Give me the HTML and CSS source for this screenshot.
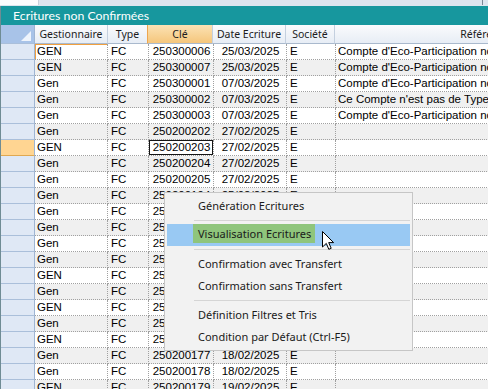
FILE: index.html
```html
<!DOCTYPE html>
<html lang="fr">
<head>
  <meta charset="UTF-8" />
  <title>Ecritures non Confirmées</title>
  <link rel="stylesheet" href="styles.css">
</head>
<body>
  <div class="strip"><div class="tab"></div><div class="tick"></div></div>
  <div class="panel">
    <div class="caption">Ecritures non Confirmées</div>
    <div class="grid">
      <div class="row head">
        <div class="sel corner"><span class="tri"></span></div>
        <div class="c gest">Gestionnaire</div>
        <div class="c type">Type</div>
        <div class="c cle sorted">Clé</div>
        <div class="c date">Date Ecriture</div>
        <div class="c soc">Société</div>
        <div class="c ref">Référence</div>
      </div>
      <div class="row first"><div class="sel"></div><div class="c gest">GEN</div><div class="c type">FC</div><div class="c cle">250300006</div><div class="c date">25/03/2025</div><div class="c soc">E</div><div class="c ref">Compte d'Eco-Participation non renseigné</div></div>
      <div class="row"><div class="sel"></div><div class="c gest">GEN</div><div class="c type">FC</div><div class="c cle">250300007</div><div class="c date">25/03/2025</div><div class="c soc">E</div><div class="c ref">Compte d'Eco-Participation non renseigné</div></div>
      <div class="row"><div class="sel"></div><div class="c gest">Gen</div><div class="c type">FC</div><div class="c cle">250300001</div><div class="c date">07/03/2025</div><div class="c soc">E</div><div class="c ref">Compte d'Eco-Participation non renseigné</div></div>
      <div class="row"><div class="sel"></div><div class="c gest">Gen</div><div class="c type">FC</div><div class="c cle">250300002</div><div class="c date">07/03/2025</div><div class="c soc">E</div><div class="c ref">Ce Compte n'est pas de Type Produit</div></div>
      <div class="row"><div class="sel"></div><div class="c gest">Gen</div><div class="c type">FC</div><div class="c cle">250300003</div><div class="c date">07/03/2025</div><div class="c soc">E</div><div class="c ref">Compte d'Eco-Participation non renseigné</div></div>
      <div class="row"><div class="sel"></div><div class="c gest">Gen</div><div class="c type">FC</div><div class="c cle">250200202</div><div class="c date">27/02/2025</div><div class="c soc">E</div><div class="c ref"></div></div>
      <div class="row current"><div class="sel"></div><div class="c gest">GEN</div><div class="c type">FC</div><div class="c cle focus">250200203</div><div class="c date">27/02/2025</div><div class="c soc">E</div><div class="c ref"></div></div>
      <div class="row"><div class="sel"></div><div class="c gest">Gen</div><div class="c type">FC</div><div class="c cle">250200204</div><div class="c date">27/02/2025</div><div class="c soc">E</div><div class="c ref"></div></div>
      <div class="row"><div class="sel"></div><div class="c gest">Gen</div><div class="c type">FC</div><div class="c cle">250200205</div><div class="c date">27/02/2025</div><div class="c soc">E</div><div class="c ref"></div></div>
      <div class="row"><div class="sel"></div><div class="c gest">Gen</div><div class="c type">FC</div><div class="c cle">250200194</div><div class="c date">25/02/2025</div><div class="c soc">E</div><div class="c ref"></div></div>
      <div class="row"><div class="sel"></div><div class="c gest">Gen</div><div class="c type">FC</div><div class="c cle">250200195</div><div class="c date">25/02/2025</div><div class="c soc">E</div><div class="c ref"></div></div>
      <div class="row"><div class="sel"></div><div class="c gest">Gen</div><div class="c type">FC</div><div class="c cle">250200196</div><div class="c date">25/02/2025</div><div class="c soc">E</div><div class="c ref"></div></div>
      <div class="row"><div class="sel"></div><div class="c gest">Gen</div><div class="c type">FC</div><div class="c cle">250200197</div><div class="c date">25/02/2025</div><div class="c soc">E</div><div class="c ref"></div></div>
      <div class="row"><div class="sel"></div><div class="c gest">Gen</div><div class="c type">FC</div><div class="c cle">250200188</div><div class="c date">21/02/2025</div><div class="c soc">E</div><div class="c ref"></div></div>
      <div class="row"><div class="sel"></div><div class="c gest">GEN</div><div class="c type">FC</div><div class="c cle">250200189</div><div class="c date">21/02/2025</div><div class="c soc">E</div><div class="c ref"></div></div>
      <div class="row"><div class="sel"></div><div class="c gest">Gen</div><div class="c type">FC</div><div class="c cle">250200182</div><div class="c date">20/02/2025</div><div class="c soc">E</div><div class="c ref"></div></div>
      <div class="row"><div class="sel"></div><div class="c gest">GEN</div><div class="c type">FC</div><div class="c cle">250200183</div><div class="c date">20/02/2025</div><div class="c soc">E</div><div class="c ref"></div></div>
      <div class="row"><div class="sel"></div><div class="c gest">Gen</div><div class="c type">FC</div><div class="c cle">250200180</div><div class="c date">19/02/2025</div><div class="c soc">E</div><div class="c ref"></div></div>
      <div class="row"><div class="sel"></div><div class="c gest">GEN</div><div class="c type">FC</div><div class="c cle">250200181</div><div class="c date">19/02/2025</div><div class="c soc">E</div><div class="c ref"></div></div>
      <div class="row"><div class="sel"></div><div class="c gest">Gen</div><div class="c type">FC</div><div class="c cle">250200177</div><div class="c date">18/02/2025</div><div class="c soc">E</div><div class="c ref"></div></div>
      <div class="row"><div class="sel"></div><div class="c gest">Gen</div><div class="c type">FC</div><div class="c cle">250200178</div><div class="c date">18/02/2025</div><div class="c soc">E</div><div class="c ref"></div></div>
      <div class="row"><div class="sel"></div><div class="c gest">GEN</div><div class="c type">FC</div><div class="c cle">250200179</div><div class="c date">19/02/2025</div><div class="c soc">E</div><div class="c ref"></div></div>
    </div>
  </div>

  <div class="menu">
    <div class="item">Génération Ecritures</div>
    <div class="sep"></div>
    <div class="item hover"><span class="label">Visualisation Ecritures</span></div>
    <div class="sep"></div>
    <div class="item">Confirmation avec Transfert</div>
    <div class="item">Confirmation sans Transfert</div>
    <div class="sep"></div>
    <div class="item">Définition Filtres et Tris</div>
    <div class="item">Condition par Défaut (Ctrl-F5)</div>
  </div>

  <svg class="pointer" width="14" height="20" viewBox="0 0 14 20">
    <path d="M0.5 0.5 L0.5 16 L4.3 12.4 L6.8 18.3 L9.2 17.3 L6.7 11.6 L11.6 11.6 Z" fill="#fff" stroke="#000" stroke-width="1" stroke-linejoin="round"/>
  </svg>
</body>
</html>
```

FILE: styles.css
```css
body {
  margin: 0;
  width: 488px;
  height: 389px;
  overflow: hidden;
  background-color: #ffffff;
  font-family: 'Liberation Sans', Arial, sans-serif;
  position: relative;
}
.strip {
  height: 6px;
  background-color: #dde5ee;
  display: flex;
  justify-content: space-between;
}
.tab {
  width: 38px;
  height: 5px;
  background-color: #fbfcfd;
  border-right: 1px solid #c8d0da;
}
.tick {
  width: 1px;
  height: 5px;
  margin-right: 5px;
  background-color: #7a8896;
}
.panel {
  border-left: 1px solid #6f8c94;
  overflow: hidden;
}
.caption {
  height: 19px;
  line-height: 19px;
  padding-left: 12px;
  background-color: #17979e;
  color: #ffffff;
  font-family: Lato, 'Noto Sans', sans-serif;
  font-size: 12.3px;
}
.row {
  display: flex;
  height: 16px;
  white-space: nowrap;
}
.row:nth-child(odd) .c {
  background-color: #f0f0f0;
}
.c {
  height: 15px;
  line-height: 15px;
  padding-left: 2px;
  font-size: 11.5px;
  color: #000;
  border-right: 1px dotted #a0a0a0;
  border-bottom: 1px dotted #a0a0a0;
  background-color: #ffffff;
  overflow: hidden;
  flex-shrink: 0;
  box-sizing: content-box;
  position: relative;
}
.sel {
  width: 33px;
  height: 15px;
  flex-shrink: 0;
  background-color: #dfe8f5;
  border-right: 1px solid #9fb5d3;
  border-bottom: 1px solid #aabfda;
}
.current .sel {
  background-color: #ffd592;
  border-bottom-color: #e0a850;
}
.gest { width: 70px; }
.type { width: 37px; padding-left: 3px; }
.cle { width: 63px; padding-left: 1px; text-align: center; }
.date { width: 71px; padding-left: 1px; text-align: center; }
.soc { width: 45px; padding-left: 3px; }
.ref { width: 300px; }
.first .gest {
  box-shadow: inset 1px 1px 0 #f0a040;
}
.focus::after {
  content: "";
  position: absolute;
  left: -1px;
  top: -1px;
  right: -1px;
  bottom: -1px;
  border: 2px solid #151515;
}

/* en-tete */
.head {
  height: 19px;
}
.head .sel {
  height: 18px;
}
.head .c {
  height: 18px;
  line-height: 18px;
  padding-left: 0;
  text-align: center;
  font-family: 'Noto Sans', sans-serif;
  font-size: 10.5px;
  color: #1c1c1c;
  background: linear-gradient(#fafbfd, #e7edf5);
  border-right: 1px solid #c4d0df;
  border-bottom: 1px solid #a9b9cd;
}
.head .gest { width: 72px; }
.head .type { width: 39px; }
.head .cle { width: 64px; }
.head .date { width: 72px; }
.head .soc { width: 48px; }
.head .ref { width: 300px; }
.head .sorted {
  background: linear-gradient(#fbe2b4, #f5c67c);
  border-left: 1px solid #eda650;
  width: 64px;
  margin-left: -1px;
}
.corner {
  position: relative;
  background-color: #a8c3e8;
}
.tri {
  position: absolute;
  right: 3px;
  bottom: 2px;
  width: 0;
  height: 0;
  border-left: 10px solid transparent;
  border-bottom: 10px solid #eef4fc;
}

/* menu contextuel */
.menu {
  position: absolute;
  left: 164px;
  top: 192px;
  width: 243px;
  padding: 2px;
  background-color: #f2f2f2;
  border: 1px solid #c6c6c6;
  font-family: 'Noto Sans', sans-serif;
  font-size: 11px;
  color: #1a1a1a;
}
.item {
  height: 22px;
  line-height: 22px;
  padding-left: 31px;
}
.item.hover {
  background-color: #99c9f3;
  padding-left: 26px;
  line-height: 19px;
}
.label {
  display: inline-block;
  height: 19px;
  padding: 0 4px 0 5px;
  background-color: #8fc57c;
}
.sep {
  height: 7px;
  margin-left: 27px;
  position: relative;
}
.sep::after {
  content: "";
  position: absolute;
  left: 0;
  right: 0;
  top: 3px;
  height: 1px;
  background-color: #d5d5d5;
}
.pointer {
  position: absolute;
  left: 322px;
  top: 231px;
}
```
